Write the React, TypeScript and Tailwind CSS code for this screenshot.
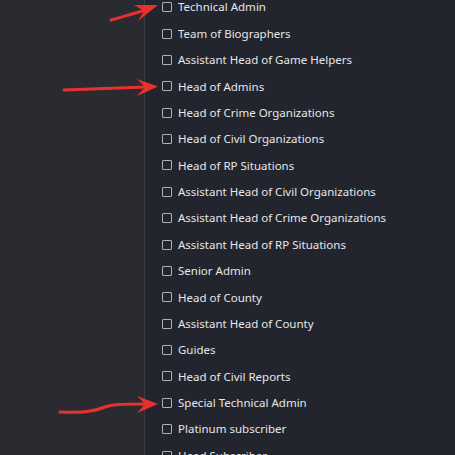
import React from "react";

const ROLES = [
  "Technical Admin",
  "Team of Biographers",
  "Assistant Head of Game Helpers",
  "Head of Admins",
  "Head of Crime Organizations",
  "Head of Civil Organizations",
  "Head of RP Situations",
  "Assistant Head of Civil Organizations",
  "Assistant Head of Crime Organizations",
  "Assistant Head of RP Situations",
  "Senior Admin",
  "Head of County",
  "Assistant Head of County",
  "Guides",
  "Head of Civil Reports",
  "Special Technical Admin",
  "Platinum subscriber",
  "Head Subscriber",
];

const Arrows: React.FC = () => (
  <svg className="pointer-events-none absolute inset-0" width="455" height="455" viewBox="0 0 455 455">
    <g fill="none" stroke="#e8312f" strokeWidth="3" strokeLinecap="round">
      <path d="M111 20 C125 16 135 13 146 10" />
      <path d="M64 90 L146 87" />
      <path d="M60 412 C78 413 92 412 102 408 C112 404 122 404 146 404" />
    </g>
    <g fill="#e8312f">
      <path d="M158 5 L134 5 L144 11 L138 21 Z" />
      <path d="M158 86.5 L137 79 L145 87 L137 96 Z" />
      <path d="M158 404 L137 396 L145 404 L137 413 Z" />
    </g>
  </svg>
);

export default function App() {
  return (
    <div
      className="relative flex h-[455px] w-[455px] overflow-hidden bg-[#22252d]"
      style={{ fontFamily: '"Noto Sans", "Open Sans", sans-serif' }}
    >
      <aside className="h-full w-[145px] shrink-0 border-r border-[#3b3e46] bg-[#2a2b30]" />
      <ul className="-mt-[6px] flex flex-col pl-[17px]">
        {ROLES.map((r) => (
          <li key={r} className="flex h-[26.38px] shrink-0 items-center gap-[6px]">
            <span className="h-[10px] w-[10px] rounded-[1px] border border-[#aeb1b7]" />
            <span className="text-[11.5px] leading-none text-[#e6e7e9]">{r}</span>
          </li>
        ))}
      </ul>
      <Arrows />
    </div>
  );
}
